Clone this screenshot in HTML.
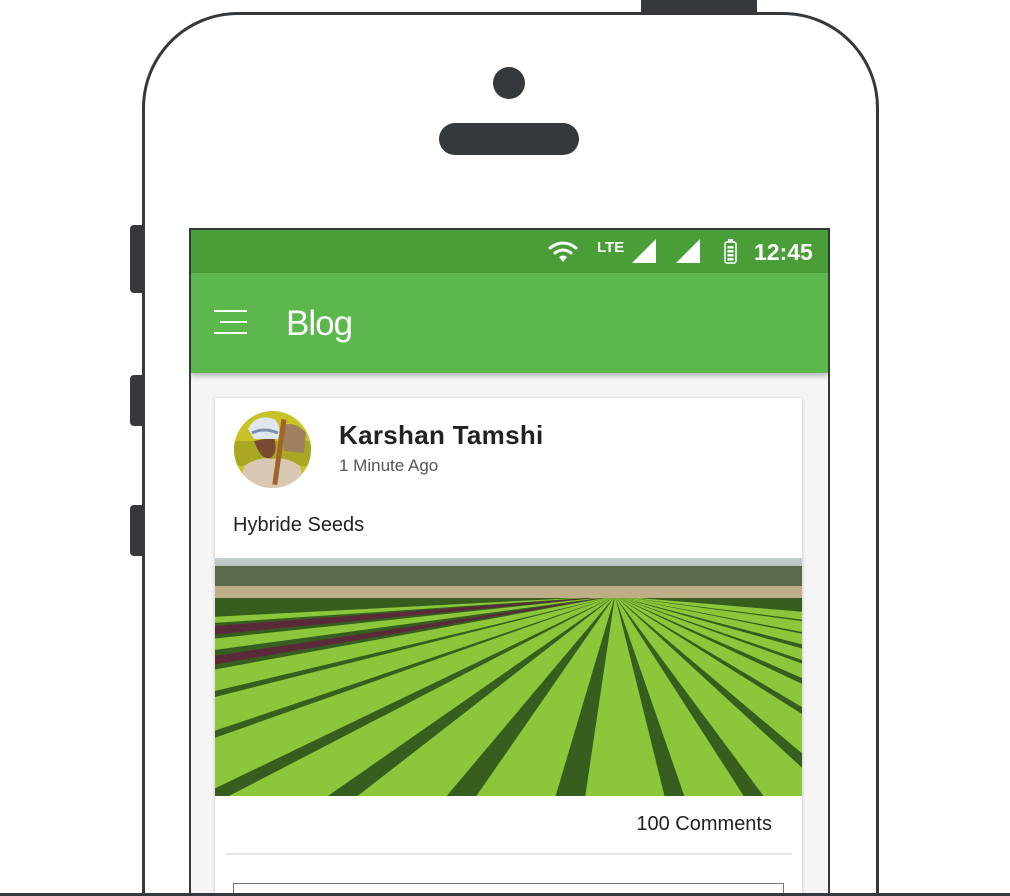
<!DOCTYPE html>
<html><head><meta charset="utf-8"><style>
*{margin:0;padding:0;box-sizing:border-box}
html,body{width:1010px;height:896px;overflow:hidden}
body{background:#fff;position:relative;font-family:"Liberation Sans",sans-serif}
.a{position:absolute}
</style></head><body>
<div class="a" style="left:0;top:0;width:1010px;height:896px;overflow:hidden">
<div class="a" style="left:641px;top:0;width:116px;height:16px;background:#35383c;border-radius:0 0 3px 3px"></div>
<div class="a" style="left:142px;top:12px;width:737px;height:884px;border:3px solid #35383c;border-bottom:none;border-radius:96px 96px 0 0;background:#fff"></div>
<div class="a" style="left:130px;top:225px;width:14px;height:68px;background:#35383c;border-radius:4px 0 0 4px"></div>
<div class="a" style="left:130px;top:375px;width:14px;height:51px;background:#35383c;border-radius:4px 0 0 4px"></div>
<div class="a" style="left:130px;top:505px;width:14px;height:51px;background:#35383c;border-radius:4px 0 0 4px"></div>
<div class="a" style="left:493px;top:67px;width:32px;height:32px;background:#35383c;border-radius:50%"></div>
<div class="a" style="left:439px;top:123px;width:140px;height:32px;background:#35383c;border-radius:16px"></div>
<div class="a" style="left:189px;top:228px;width:641px;height:668px;border:2px solid #35383c;border-bottom:none;background:#f5f5f5;overflow:hidden">
 <div class="a" style="left:0;top:0;width:637px;height:43px;background:#4a9e38"></div>
 <div class="a" style="left:0;top:43px;width:637px;height:100px;background:#5cb84d;box-shadow:0 3px 5px rgba(0,0,0,.25)"></div>
</div>
<svg class="a" style="left:545px;top:236px" width="280" height="30" viewBox="0 0 280 30">
 <g fill="none" stroke="#fff" stroke-width="3" stroke-linecap="round">
  <path d="M5 12 Q18 2 31 12"/><path d="M10 17 Q18 11 26 17"/>
 </g>
 <path d="M14 21 L18 26 L22 21 Q18 18 14 21Z" fill="#fff"/>
 <text x="52" y="16" fill="#fff" font-size="15" font-weight="bold" font-family="Liberation Sans">LTE</text>
 <path d="M87 27 L111 3 L111 27Z" fill="#fff"/>
 <path d="M131 27 L155 3 L155 27Z" fill="#fff"/>
 <rect x="180" y="6" width="11" height="21" rx="2" fill="none" stroke="#fff" stroke-width="1.5"/>
 <rect x="183" y="3" width="5" height="3" fill="#fff"/>
 <g fill="#fff"><rect x="182.5" y="10" width="6" height="2.5"/><rect x="182.5" y="14" width="6" height="2.5"/><rect x="182.5" y="18" width="6" height="2.5"/><rect x="182.5" y="22" width="6" height="2.5"/></g>
 <text x="209" y="24" fill="#fff" font-size="23" font-weight="bold" font-family="Liberation Sans">12:45</text>
</svg>
<div class="a" style="left:214px;top:310px;width:33px;height:2px;background:#fff"></div>
<div class="a" style="left:220px;top:321px;width:27px;height:2px;background:#fff"></div>
<div class="a" style="left:214px;top:332px;width:33px;height:2px;background:#fff"></div>
<div class="a" style="left:286px;top:304px;color:#fff;font-size:35px;line-height:40px;letter-spacing:-1px">Blog</div>
<div class="a" style="left:215px;top:398px;width:587px;height:498px;background:#fff;box-shadow:0 1px 4px rgba(0,0,0,.2)"></div>
<svg class="a" style="left:234px;top:411px" width="77" height="77" viewBox="0 0 77 77">
 <defs><clipPath id="c"><circle cx="38.5" cy="38.5" r="38.5"/></clipPath></defs>
 <g clip-path="url(#c)">
  <rect width="77" height="77" fill="#c9c226"/>
  <rect x="0" y="30" width="77" height="25" fill="#a9a820"/>
  <path d="M48 14 Q62 10 72 22 L70 42 L50 40Z" fill="#9c8060"/>
  <path d="M5 77 L10 55 Q25 45 38 48 Q52 45 66 55 L72 77Z" fill="#d9c9b4"/>
  <path d="M20 30 Q28 52 38 46 Q44 40 40 26Z" fill="#7a4a30"/>
  <path d="M14 18 Q22 2 40 8 Q48 14 44 28 L20 28Z" fill="#dfe6ee"/>
  <path d="M18 22 Q30 16 44 22" stroke="#7a8fb0" stroke-width="3" fill="none"/>
  <rect x="43" y="8" width="5" height="66" fill="#a0642c" transform="rotate(8 45 40)"/>
 </g>
</svg>
<div class="a" style="left:339px;top:420px;font-size:26px;font-weight:bold;color:#222;letter-spacing:.3px">Karshan Tamshi</div>
<div class="a" style="left:339px;top:456px;font-size:17px;color:#555">1 Minute Ago</div>
<div class="a" style="left:233px;top:514px;font-size:20px;color:#222">Hybride Seeds</div>
<svg class="a" style="left:215px;top:558px" width="587" height="238" viewBox="0 0 587 238" preserveAspectRatio="none">
 <defs><linearGradient id="sky" x1="0" y1="0" x2="0" y2="1"><stop offset="0" stop-color="#c5ced2"/><stop offset="1" stop-color="#8b9884"/></linearGradient>
 <clipPath id="f"><rect x="0" y="40" width="587" height="198"/></clipPath></defs>
 <rect width="587" height="40" fill="url(#sky)"/>
 <rect y="8" width="587" height="24" fill="#5c6a4c"/>
 <rect y="28" width="587" height="12" fill="#bcae86"/>
 <rect y="40" width="587" height="198" fill="#365e1e"/>
 <g clip-path="url(#f)">
  <g fill="#8cc63a">
   <polygon points="400,38 -3500,240 -2600,240"/>
   <polygon points="400,38 -1500,240 -1100,240"/>
   <polygon points="400,38 -700,240 -450,240"/>
   <polygon points="400,38 -400,240 -200,240"/>
   <polygon points="400,38 -170,240 -20,240"/>
   <polygon points="400,38 10,240 110,240"/>
   <polygon points="400,38 140,240 230,240"/>
   <polygon points="400,38 260,240 340,240"/>
   <polygon points="400,38 370,240 450,240"/>
   <polygon points="400,38 470,240 530,240"/>
   <polygon points="400,38 550,240 620,240"/>
   <polygon points="400,38 640,240 720,240"/>
   <polygon points="400,38 740,240 830,240"/>
   <polygon points="400,38 860,240 960,240"/>
   <polygon points="400,38 990,240 1120,240"/>
   <polygon points="400,38 1180,240 1400,240"/>
   <polygon points="400,38 1450,240 1900,240"/>
   <polygon points="400,38 2000,240 2800,240"/>
  </g>
  <g fill="#5a2a3a">
   <polygon points="400,38 -2300,240 -1700,240"/>
   <polygon points="400,38 -950,240 -780,240"/>
  </g>
 </g>
</svg>
<div class="a" style="left:560px;top:813px;width:212px;text-align:right;font-size:20px;color:#222">100 Comments</div>
<div class="a" style="left:226px;top:853px;width:566px;height:2px;background:#e6e6e6"></div>
<div class="a" style="left:233px;top:883px;width:551px;height:13px;border:1.5px solid #777;border-bottom:none"></div>
<div class="a" style="left:0;top:893px;width:1010px;height:3px;background:#35383c"></div>
</div>
</body></html>
